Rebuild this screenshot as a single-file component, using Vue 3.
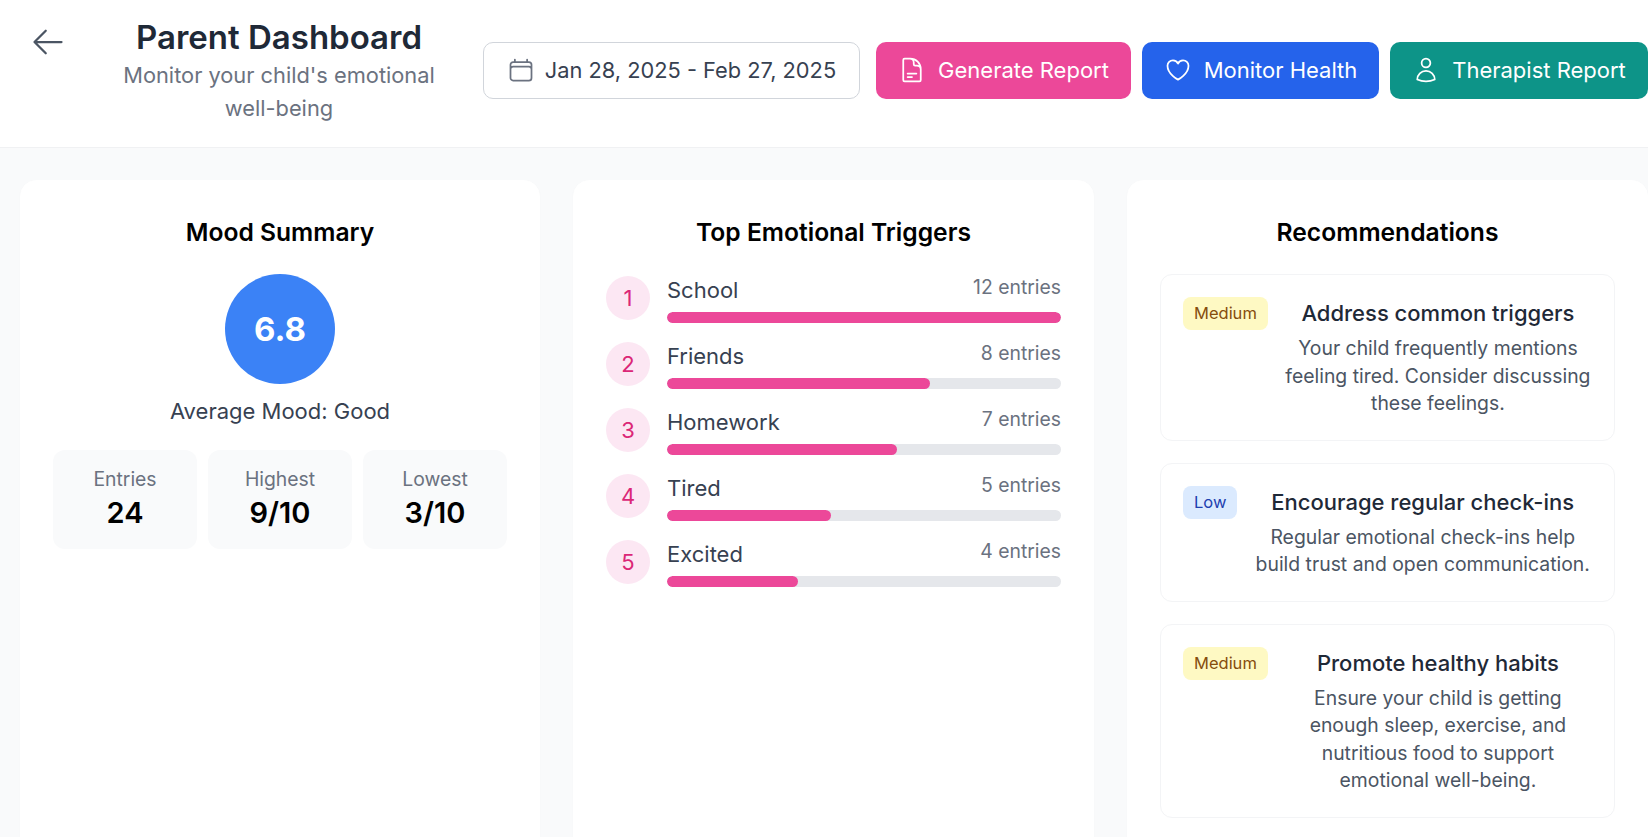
<template>
  <div class="page">
    <header class="top-bar">
      <button class="back-btn" aria-label="Back">
        <svg width="36" height="36" viewBox="0 0 24 24" fill="none" stroke="currentColor" stroke-width="1.5" stroke-linecap="round" stroke-linejoin="round">
          <path d="M10.5 19.5 3 12m0 0 7.5-7.5M3 12h18" />
        </svg>
      </button>
      <div class="title-block">
        <h1>Parent Dashboard</h1>
        <p>Monitor your child's emotional well-being</p>
      </div>
      <div class="actions">
        <button class="date-btn">
          <svg width="28" height="28" viewBox="0 0 24 24" fill="none" stroke="#6b7280" stroke-width="1.5" stroke-linecap="round" stroke-linejoin="round">
            <path d="M6.75 3v2.25M17.25 3v2.25M3 18.75V7.5a2.25 2.25 0 0 1 2.25-2.25h13.5A2.25 2.25 0 0 1 21 7.5v11.25m-18 0A2.25 2.25 0 0 0 5.25 21h13.5A2.25 2.25 0 0 0 21 18.75m-18 0v-7.5A2.25 2.25 0 0 1 5.25 9h13.5A2.25 2.25 0 0 1 21 11.25v7.5" />
          </svg>
          Jan 28, 2025 - Feb 27, 2025
        </button>
        <button class="action-btn pink">
          <svg width="28" height="28" viewBox="0 0 24 24" fill="none" stroke="currentColor" stroke-width="1.5" stroke-linecap="round" stroke-linejoin="round">
            <path d="M19.5 14.25v-2.625a3.375 3.375 0 0 0-3.375-3.375h-1.5A1.125 1.125 0 0 1 13.5 7.125v-1.5a3.375 3.375 0 0 0-3.375-3.375H8.25m0 12.75h7.5m-7.5 3H12M10.5 2.25H5.625c-.621 0-1.125.504-1.125 1.125v17.25c0 .621.504 1.125 1.125 1.125h12.75c.621 0 1.125-.504 1.125-1.125V11.25a9 9 0 0 0-9-9Z" />
          </svg>
          Generate Report
        </button>
        <button class="action-btn blue">
          <svg width="28" height="28" viewBox="0 0 24 24" fill="none" stroke="currentColor" stroke-width="1.5" stroke-linecap="round" stroke-linejoin="round">
            <path d="M21 8.25c0-2.485-2.099-4.5-4.688-4.5-1.935 0-3.597 1.126-4.312 2.733-.715-1.607-2.377-2.733-4.313-2.733C5.1 3.75 3 5.765 3 8.25c0 7.22 9 12 9 12s9-4.78 9-12Z" />
          </svg>
          Monitor Health
        </button>
        <button class="action-btn teal">
          <svg width="28" height="28" viewBox="0 0 24 24" fill="none" stroke="currentColor" stroke-width="1.5" stroke-linecap="round" stroke-linejoin="round">
            <path d="M15.75 6a3.75 3.75 0 1 1-7.5 0 3.75 3.75 0 0 1 7.5 0ZM4.501 20.118a7.5 7.5 0 0 1 14.998 0A17.933 17.933 0 0 1 12 21.75c-2.676 0-5.216-.584-7.499-1.632Z" />
          </svg>
          Therapist Report
        </button>
      </div>
    </header>

    <main class="columns">
      <section class="card">
        <h2>Mood Summary</h2>
        <div class="mood-circle">6.8</div>
        <p class="mood-label">Average Mood: Good</p>
        <div class="stats">
          <div v-for="stat in stats" :key="stat.label" class="stat">
            <span class="stat-label">{{ stat.label }}</span>
            <strong class="stat-value">{{ stat.value }}</strong>
          </div>
        </div>
      </section>

      <section class="card">
        <h2>Top Emotional Triggers</h2>
        <div class="triggers">
          <div v-for="(item, index) in triggers" :key="item.name" class="trigger">
            <div class="rank">{{ index + 1 }}</div>
            <div class="trigger-body">
              <div class="trigger-head">
                <span class="trigger-name">{{ item.name }}</span>
                <span class="trigger-count">{{ item.count }} entries</span>
              </div>
              <div class="track">
                <div class="fill" :style="{ width: (item.count / 12) * 100 + '%' }"></div>
              </div>
            </div>
          </div>
        </div>
      </section>

      <section class="card">
        <h2>Recommendations</h2>
        <div class="recs">
          <div v-for="rec in recommendations" :key="rec.title" class="rec">
            <span class="badge" :class="rec.level.toLowerCase()">{{ rec.level }}</span>
            <div class="rec-text">
              <h3>{{ rec.title }}</h3>
              <p>{{ rec.text }}</p>
            </div>
          </div>
        </div>
      </section>
    </main>
  </div>
</template>

<script setup>
const stats = [
  { label: 'Entries', value: '24' },
  { label: 'Highest', value: '9/10' },
  { label: 'Lowest', value: '3/10' }
]

const triggers = [
  { name: 'School', count: 12 },
  { name: 'Friends', count: 8 },
  { name: 'Homework', count: 7 },
  { name: 'Tired', count: 5 },
  { name: 'Excited', count: 4 }
]

const recommendations = [
  {
    level: 'Medium',
    title: 'Address common triggers',
    text: 'Your child frequently mentions feeling tired. Consider discussing these feelings.'
  },
  {
    level: 'Low',
    title: 'Encourage regular check-ins',
    text: 'Regular emotional check-ins help build trust and open communication.'
  },
  {
    level: 'Medium',
    title: 'Promote healthy habits',
    text: 'Ensure your child is getting enough sleep, exercise, and nutritious food to support emotional well-being.'
  }
]
</script>

<style>
html,
body {
  margin: 0;
  overflow: hidden;
}
</style>

<style scoped>
* {
  box-sizing: border-box;
}

.page {
  width: 1648px;
  height: 837px;
  overflow: hidden;
  background: #f9fafb;
  font-family: Inter, "Noto Sans", sans-serif;
}

.top-bar {
  display: flex;
  align-items: flex-start;
  height: 148px;
  padding-left: 30px;
  background: #fff;
  border-bottom: 1px solid #f0f1f3;
}

.back-btn {
  display: flex;
  margin-top: 24px;
  padding: 0;
  border: none;
  background: none;
  color: #4b5563;
}

.title-block {
  flex: none;
  width: 340px;
  margin: 17px 34px 0 43px;
  text-align: center;
}

h1 {
  margin: 0;
  font-size: 33px;
  font-weight: 600;
  line-height: 40px;
  color: #1f2937;
}

.title-block p {
  margin: 2px 0 0;
  font-size: 21.8px;
  line-height: 33px;
  color: #6b7280;
}

.actions {
  display: flex;
  align-items: center;
  margin-top: 42px;
}

.actions button {
  display: flex;
  flex: none;
  align-items: center;
  justify-content: center;
  gap: 12px;
  height: 57px;
  padding: 0 0 2px;
  border-radius: 10px;
  font-family: inherit;
  font-size: 22px;
}

.actions .date-btn {
  gap: 10px;
  width: 377px;
  margin-right: 16px;
  border: 1px solid #d1d5db;
  background: #fff;
  color: #374151;
  font-size: 21.8px;
}

.action-btn {
  margin-right: 11px;
  border: none;
  color: #fff;
}

.pink {
  width: 255px;
  background: #ec4899;
}

.blue {
  width: 237px;
  background: #2563eb;
}

.teal {
  width: 258px;
  margin-right: 0;
  background: #0d9488;
}

.columns {
  display: grid;
  grid-template-columns: 520px 521px 521px;
  gap: 33px;
  padding: 32px 0 0 20px;
}

.card {
  min-height: 700px;
  padding: 32px;
  background: #fff;
  border: 1px solid #fff;
  border-radius: 16px;
  box-shadow: 0 1px 3px rgba(0, 0, 0, 0.02);
}

h2 {
  margin: 0;
  font-size: 24.64px;
  font-weight: 600;
  line-height: 38px;
  text-align: center;
  color: #000;
}

.mood-circle {
  display: flex;
  align-items: center;
  justify-content: center;
  width: 110px;
  height: 110px;
  margin: 23px auto 0;
  border-radius: 50%;
  background: #3b82f6;
  color: #fff;
  font-size: 33px;
  font-weight: 700;
}

.mood-label {
  margin: 12px 0 0;
  font-size: 22px;
  line-height: 30px;
  text-align: center;
  color: #374151;
}

.stats {
  display: grid;
  grid-template-columns: repeat(3, 1fr);
  gap: 11px;
  margin-top: 24px;
}

.stat {
  display: flex;
  flex-direction: column;
  align-items: center;
  height: 99px;
  padding-top: 15px;
  background: #f9fafb;
  border-radius: 12px;
}

.stat-label {
  font-size: 19.36px;
  line-height: 29px;
  color: #6b7280;
}

.stat-value {
  font-size: 29px;
  font-weight: 600;
  line-height: 38px;
  color: #000;
}

.triggers {
  display: flex;
  flex-direction: column;
  gap: 22px;
  margin-top: 25px;
}

.trigger {
  display: flex;
  align-items: flex-start;
  gap: 17px;
  height: 44px;
}

.rank {
  flex: none;
  display: flex;
  align-items: center;
  justify-content: center;
  width: 44px;
  height: 44px;
  border-radius: 50%;
  background: #fce7f3;
  color: #db2777;
  font-size: 22px;
}

.trigger-body {
  flex: 1;
}

.trigger-head {
  display: flex;
  justify-content: space-between;
  align-items: flex-start;
  height: 36px;
}

.trigger-name {
  font-size: 22px;
  line-height: 28px;
  color: #374151;
}

.trigger-count {
  font-size: 19.36px;
  line-height: 22px;
  color: #6b7280;
}

.track {
  height: 11px;
  overflow: hidden;
  background: #e5e7eb;
  border-radius: 6px;
}

.fill {
  height: 100%;
  background: #ec4899;
  border-radius: 6px;
}

.recs {
  display: flex;
  flex-direction: column;
  gap: 22px;
  margin-top: 23px;
}

.rec {
  display: flex;
  align-items: flex-start;
  gap: 16px;
  padding: 22px;
  border: 1px solid #f3f4f6;
  border-radius: 12px;
}

.badge {
  flex: none;
  height: 33px;
  padding: 0 11px;
  border-radius: 8px;
  font-size: 16.5px;
  line-height: 33px;
}

.medium {
  background: #fef9c3;
  color: #854d0e;
}

.low {
  background: #dbeafe;
  color: #1e40af;
}

.rec-text {
  flex: 1;
  text-align: center;
}

h3 {
  margin: 0;
  font-size: 22px;
  font-weight: 500;
  line-height: 33px;
  color: #1f2937;
}

.rec-text p {
  margin: 5px 0 0;
  font-size: 19.36px;
  line-height: 27.5px;
  color: #4b5563;
}
</style>
